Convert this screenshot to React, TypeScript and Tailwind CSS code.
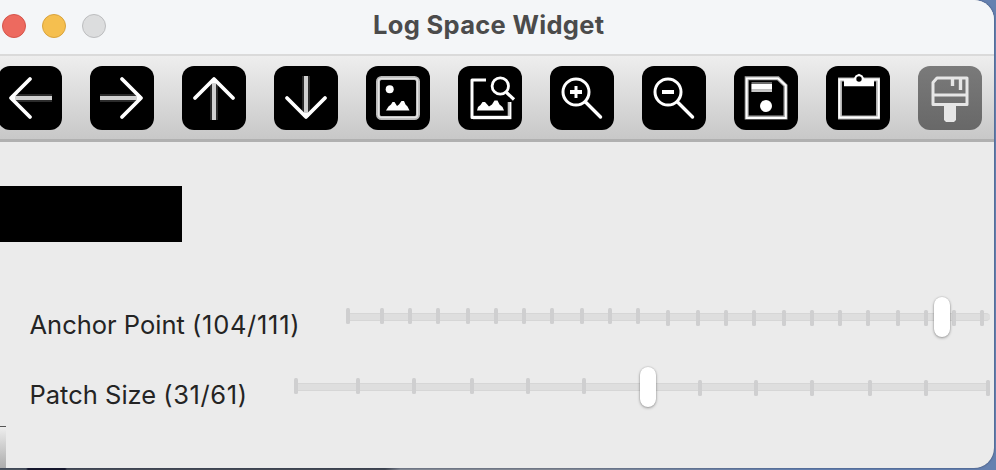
import type { ReactNode } from "react";

const Tile = ({ children, muted = false }: { children: ReactNode; muted?: boolean }) => (
  <button
    className={
      muted
        ? "block h-16 w-16 shrink-0 rounded-[12px] bg-linear-to-b from-[#7a7a7a] to-[#686868]"
        : "block h-16 w-16 shrink-0 rounded-[12px] bg-black"
    }
  >
    <svg viewBox="0 0 64 64" className="h-16 w-16" fill="none" stroke="white" strokeWidth="3.8">
      {children}
    </svg>
  </button>
);

const Arrow = ({ turn }: { turn: number }) => (
  <g transform={`rotate(${turn} 32 32)`}>
    <path d="M10 32H48" stroke="#2b2b2b" strokeWidth="8" />
    <path d="M10 32H50" stroke="#d0d0d0" strokeWidth="4" />
    <path d="M32 13L51 32L32 51" strokeLinecap="round" strokeLinejoin="round" />
    <path d="M47 32H51" strokeWidth="5" />
  </g>
);

const Magnifier = ({ plus = false }: { plus?: boolean }) => (
  <>
    <circle cx="26" cy="26" r="13" strokeWidth="3" />
    <path d="M35.5 36L50.5 51" strokeLinecap="round" strokeWidth="3.4" />
    <path d="M20 26H32" strokeWidth="4" />
    {plus && <path d="M26 20V32" strokeWidth="3" />}
  </>
);

const Slider = ({
  ticks,
  split,
  thumb,
  origin,
  end,
}: {
  ticks: number[];
  split: number;
  thumb: number;
  origin: number;
  end: number;
}) => (
  <div className="relative h-10" style={{ width: end - origin }}>
    <div className="absolute inset-x-0 top-4 h-2 rounded-r-full border-y border-[#d6d6d6] bg-[#dedede]" />
    {ticks.map((x, i) => (
      <span
        key={x}
        className={
          i < split
            ? "absolute top-[11px] h-4 w-1 rounded-[1.5px] bg-[#cfcfd0]"
            : "absolute top-[13px] h-4 w-1 rounded-[1.5px] bg-[#cfcfd0]"
        }
        style={{ left: x - origin - 2 }}
      />
    ))}
    <span
      className="absolute top-0 h-10 w-4 rounded-full bg-white shadow-[0_0_1px_0.5px_rgba(0,0,0,0.1),0_1px_3px_rgba(0,0,0,0.35)]"
      style={{ left: thumb - origin - 8 }}
    />
  </div>
);

const anchorTicks = [
  348, 382, 410, 438, 468, 496, 524, 552, 582, 610, 638, 668, 698, 726, 754, 784, 812, 840, 868, 898, 926, 954, 982,
];
const patchTicks = [296, 358, 414, 472, 528, 584, 642, 700, 756, 812, 870, 926, 988];

export default function App() {
  return (
    <div className="relative h-[470px] w-[996px] overflow-hidden bg-[linear-gradient(to_right,#4c545f_0,#4c545f_26px,#15152a_28px,#15152a_65px,#4a4f5a_67px,#454a54_385px,#858b96_400px,#858b96_560px,#6581b0_800px)] font-['Inter',sans-serif]">
      <div className="flex h-[468px] w-[994px] flex-col overflow-hidden rounded-r-[20px] bg-[#ebebeb] shadow-[0_0_2px_rgba(20,30,60,0.7)]">
        <header className="grid h-[54px] shrink-0 grid-cols-[1fr_auto_1fr] items-center bg-[#f4f6f8] pb-[2px]">
          <div className="flex gap-4 pl-[2px]">
            <span className="h-6 w-6 rounded-full border border-[#d5544b] bg-[#ed6a5f]" />
            <span className="h-6 w-6 rounded-full border border-[#d9a33c] bg-[#f5bf4f]" />
            <span className="h-6 w-6 rounded-full border border-[#bcbdbf] bg-[#dcddde]" />
          </div>
          <h1 className="-mt-[2px] w-[252px] pl-[2px] text-[25.5px] leading-8 font-bold tracking-[0.32px] whitespace-nowrap text-[#4b4b4b]">
            Log Space Widget
          </h1>
        </header>
        <div className="flex h-[88px] shrink-0 border-t-2 border-b-[3px] border-t-[#dadada] border-b-[#b0b0b0] bg-linear-to-b from-[#eeeeee] to-[#c8c8c8] pt-[10px]">
          <div className="-ml-[2px] flex gap-7">
            <Tile><Arrow turn={180} /></Tile>
            <Tile><Arrow turn={0} /></Tile>
            <Tile><Arrow turn={-90} /></Tile>
            <Tile><Arrow turn={90} /></Tile>
            <Tile>
              <rect x="12" y="12" width="40" height="40" rx="3.5" stroke="#b8b8b8" strokeWidth="4" />
              <rect x="12.5" y="12.5" width="39" height="39" rx="3" stroke="#e4e4e4" strokeWidth="1.4" />
              <circle cx="23.7" cy="23.3" r="4" fill="white" stroke="none" />
              <path d="M20 44.5L22.5 40.5L25 38.5L26.5 36H28.5L31 40L33 38.5L35.5 35H38L39.5 38.5L41.5 40.5L43.5 44.5Z" fill="white" stroke="none" />
            </Tile>
            <Tile>
              <path d="M15 51.5H51.5V36" stroke="#c4c4c4" strokeWidth="3.6" />
              <path d="M28 14H14V51.5H51.5V50" strokeWidth="3" strokeLinejoin="round" />
              <path d="M52.5 53V36" strokeWidth="1.5" />
              <circle cx="42.3" cy="20" r="8.2" strokeWidth="2.8" />
              <path d="M48.5 26.5L56 33.5" strokeWidth="3.2" />
              <path d="M19 44.5L20 41L22.5 39L24.5 36H27L31 40.5L34 38.5L36.5 34.5H39.5L41.5 38.5L44.5 41L46 44.5Z" fill="white" stroke="none" />
            </Tile>
            <Tile><Magnifier plus /></Tile>
            <Tile><Magnifier /></Tile>
            <Tile>
              <path d="M12.7 12.3H44L51.5 19.5V51.5H12.7Z" stroke="#a8a8a8" strokeWidth="4" />
              <path d="M12.7 12.3H44L51.8 19.5V52H12.7Z" strokeWidth="1.8" />
              <path d="M17.5 16H38V26H17.5Z" fill="#6c6c6c" stroke="none" />
              <path d="M17.5 18H38V23.5H17.5Z" fill="white" stroke="none" />
              <path d="M17.5 23.5H38V26H17.5Z" fill="#c8c8c8" stroke="none" />
              <circle cx="32" cy="40" r="6" fill="white" stroke="none" />
            </Tile>
            <Tile>
              <path d="M14 13.5V51.5H52V13.5Z" stroke="#b0b0b0" strokeWidth="4" />
              <path d="M13.3 13.5H52.7V51.5H13.3Z" strokeWidth="2" />
              <path d="M18 14H48V20.3H18Z" fill="white" stroke="none" />
              <path d="M27 14L29.5 9.5L33 7.8L36.5 9.5L39 14Z" fill="white" stroke="none" />
              <circle cx="33" cy="13" r="2.7" fill="black" stroke="none" />
            </Tile>
            <Tile muted>
              <path d="M19 12H49V38.5H15V16.5Z" stroke="#e6e6e6" strokeWidth="3" strokeLinejoin="round" />
              <path d="M15 29H49" stroke="#e6e6e6" strokeWidth="3" />
              <path d="M34.5 12V20M42.5 12V24" stroke="#e6e6e6" strokeWidth="3.4" />
              <path d="M26 39H38V54L36 56H28L26 54Z" fill="#e6e6e6" stroke="none" />
            </Tile>
          </div>
        </div>
        <main className="flex flex-1 flex-col pt-11">
          <div className="h-14 w-[182px] bg-black" />
          <div className="mt-[55px] flex h-10 pl-[29.5px]">
            <label className="w-[318.5px] pt-3 text-[25.5px] leading-8 whitespace-nowrap text-[#242424]">
              Anchor Point <span className="tracking-[0.7px]">(104/111)</span>
            </label>
            <Slider ticks={anchorTicks} split={11} thumb={942} origin={348} end={990} />
          </div>
          <div className="mt-[30px] flex h-10 pl-[29.5px]">
            <label className="w-[266.5px] pt-3 text-[25.5px] leading-8 whitespace-nowrap text-[#242424]">
              Patch Size <span className="tracking-[0.6px]">(31/61)</span>
            </label>
            <Slider ticks={patchTicks} split={6} thumb={648} origin={296} end={990} />
          </div>
          <div className="mt-auto h-[42px] w-[6px] border-t border-[#555555] bg-linear-to-b from-[#eeeeee] to-[#adadad]" />
        </main>
      </div>
    </div>
  );
}
